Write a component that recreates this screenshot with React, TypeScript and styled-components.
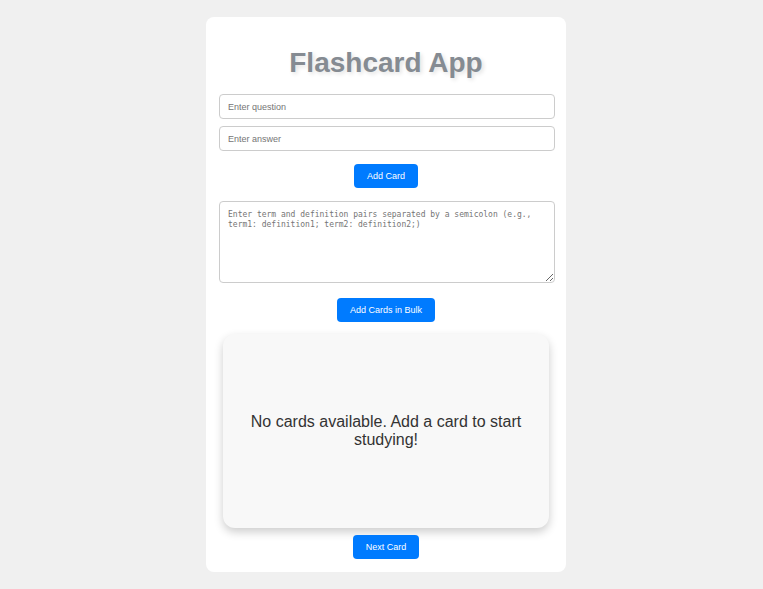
import styled, { createGlobalStyle } from "styled-components"

const GlobalStyle = createGlobalStyle`
  body {
    margin: 0;
    background-color: #f0f0f0;
    font-family: "Liberation Sans", Arial, sans-serif;
  }
`

const Page = styled.div`
  display: flex;
  justify-content: center;
  padding: 17px 0 17px 9px;
`

const Container = styled.div`
  width: 360px;
  box-sizing: border-box;
  background: #fff;
  border-radius: 8px;
  padding: 0 12px 13px;
  display: flex;
  flex-direction: column;
  align-items: center;
`

const Title = styled.h1`
  font-size: 28px;
  line-height: 32px;
  font-weight: bold;
  color: #858b92;
  text-shadow: 2px 2px 4px rgba(0, 0, 0, 0.12);
  margin: 30px 0 15px;
  text-align: center;
`

const Input = styled.input`
  width: 100%;
  box-sizing: border-box;
  height: 25px;
  padding: 0 8px;
  border: 1px solid #ccc;
  border-radius: 4px;
  font-family: "Liberation Sans", Arial, sans-serif;
  font-size: 9px;
  margin: 0 -1px 7px 1px;
  &::placeholder {
    color: #757575;
  }
`

const Button = styled.button<{ $mt: number; $mb: number }>`
  height: 24px;
  padding: 0 13px;
  border: none;
  border-radius: 4px;
  background-color: #007bff;
  color: #fff;
  font-family: "Liberation Sans", Arial, sans-serif;
  font-size: 9px;
  cursor: pointer;
  margin-top: ${(p) => p.$mt}px;
  margin-bottom: ${(p) => p.$mb}px;
`

const BulkArea = styled.textarea`
  width: 100%;
  box-sizing: border-box;
  height: 82px;
  padding: 8px;
  margin: 0 -1px 0 1px;
  border: 1px solid #ccc;
  border-radius: 4px;
  font-family: "DejaVu Sans Mono", monospace;
  font-size: 8px;
  line-height: 10px;
  &::placeholder {
    color: #757575;
  }
`

const Card = styled.div`
  width: 326px;
  height: 194px;
  box-sizing: border-box;
  margin: 12px 0 7px;
  padding: 20px;
  background: #f8f8f8;
  border-radius: 12px;
  box-shadow: 0 4px 10px rgba(0, 0, 0, 0.2);
  display: flex;
  align-items: center;
  justify-content: center;
  text-align: center;
  font-size: 16px;
  line-height: 18px;
  color: #333;
`

const App = () => {
  return (
    <>
      <GlobalStyle />
      <Page>
        <Container>
          <Title>Flashcard App</Title>
          <Input type="text" placeholder="Enter question" />
          <Input type="text" placeholder="Enter answer" />
          <Button $mt={6} $mb={13}>Add Card</Button>
          <BulkArea placeholder="Enter term and definition pairs separated by a semicolon (e.g., term1: definition1; term2: definition2;)" />
          <Button $mt={15} $mb={0}>Add Cards in Bulk</Button>
          <Card>No cards available. Add a card to start studying!</Card>
          <Button $mt={0} $mb={0}>Next Card</Button>
        </Container>
      </Page>
    </>
  )
}

export default App
